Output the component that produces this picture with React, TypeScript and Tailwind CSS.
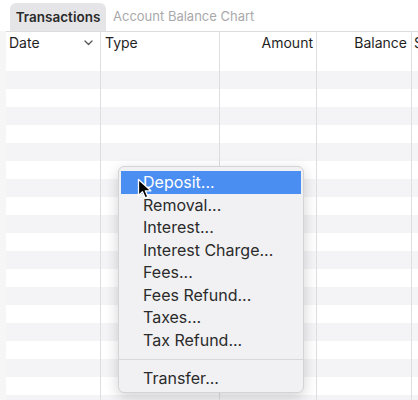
import React from 'react'

const font = { fontFamily: 'Inter, "Noto Sans", sans-serif' }

const items = ['Deposit...', 'Removal...', 'Interest...', 'Interest Charge...', 'Fees...', 'Fees Refund...', 'Taxes...', 'Tax Refund...']

function Row({ striped }: { striped: boolean }) {
  return (
    <div className={`flex h-[18px] shrink-0 ${striped ? 'bg-[#f4f3f6]' : 'bg-white'}`}>
      <div className="w-[95px] border-r border-[#dedee0]" />
      <div className="w-[119px] border-r border-[#dedee0]" />
      <div className="w-[97px] border-r border-[#dedee0]" />
      <div className="w-[95px] border-r border-[#dedee0]" />
      <div className="flex-1" />
    </div>
  )
}

export default function App() {
  return (
    <div className="relative h-[400px] w-[418px] overflow-hidden bg-[#f6f6f7] text-[#1f1f1f]" style={font}>
      {/* tabs */}
      <div className="flex h-[31px] items-end bg-white pl-[10px]">
        <div className="flex h-[28px] w-[96px] items-center justify-center rounded-t-[6px] bg-[#e5e5e7] text-[13.5px] font-semibold text-[#2a2a2a]">
          Transactions
        </div>
        <div className="flex h-[28px] items-center pl-[7px] text-[13px] text-[#a9a9ab]">Account Balance Chart</div>
      </div>

      {/* table */}
      <div className="ml-[6px] flex flex-col border-t border-[#dcdcde] bg-white">
        <div className="flex h-[21px] shrink-0 items-center bg-white text-[14px]">
          <div className="flex h-full w-[95px] items-center justify-between border-r border-[#dedee0] pl-[3px] pr-[7px]">
            <span>Date</span>
            <svg width="9" height="6" viewBox="0 0 9 6" fill="none">
              <path d="M1 1l3.5 3.5L8 1" stroke="#555" strokeWidth="1.3" strokeLinecap="round" strokeLinejoin="round" />
            </svg>
          </div>
          <div className="flex h-full w-[119px] items-center border-r border-[#dedee0] pl-[4px]">Type</div>
          <div className="flex h-full w-[97px] items-center justify-end border-r border-[#dedee0] pr-[3px]">Amount</div>
          <div className="flex h-full w-[95px] items-center justify-end border-r border-[#dedee0] pr-[4px]">Balance</div>
          <div className="flex h-full flex-1 items-center overflow-hidden pl-[2px]">S</div>
        </div>
        {Array.from({ length: 20 }).map((_, i) => (
          <Row key={i} striped={i % 2 === 1} />
        ))}
      </div>

      {/* context menu */}
      <div className="absolute left-[118px] top-[166px] w-[186px] rounded-[6px] border border-[#d4d4d6] bg-[#f1f1f3] pt-[4px] pb-[3px] text-[16px] text-[#2b2b2b] shadow-[0_4px_14px_rgba(0,0,0,0.18)]">
        {items.map((label, i) => (
          <div
            key={label}
            className={`mx-[2px] flex h-[22.5px] items-center pl-[22px] ${i === 0 ? 'bg-[#4a8ef2] text-white' : ''}`}
          >
            {label}
          </div>
        ))}
        <div className="flex h-[16px] items-center">
          <div className="h-px w-full bg-[#d8d8da]" />
        </div>
        <div className="mx-[2px] flex h-[22px] items-center pl-[22px]">Transfer...</div>
      </div>

      {/* cursor */}
      <svg className="absolute left-[137px] top-[178px]" width="16" height="22" viewBox="0 0 16 22">
        <path d="M1.5 1.5v16l4-3.8 2.7 6.2 2.7-1.1-2.6-6h5.6z" fill="#000" stroke="#fff" strokeWidth="1.3" strokeLinejoin="round" />
      </svg>
    </div>
  )
}
